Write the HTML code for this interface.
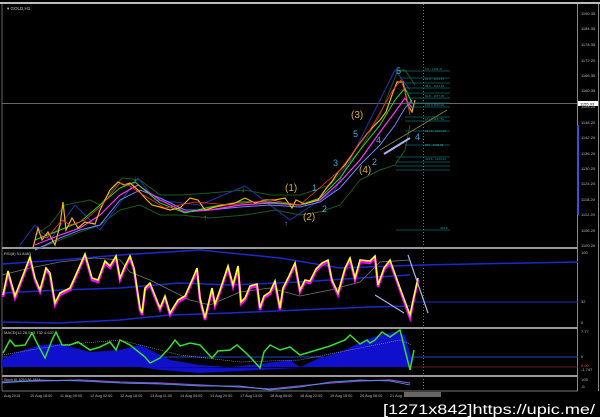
<!DOCTYPE html>
<html><head><meta charset="utf-8"><style>
html,body{margin:0;padding:0;background:#000;width:600px;height:417px;overflow:hidden}
svg{display:block}
text{font-family:"Liberation Sans",sans-serif}
</style></head><body>
<svg width="600" height="417" viewBox="0 0 600 417" xmlns="http://www.w3.org/2000/svg">
<rect width="600" height="417" fill="#000"/>
<rect x="0" y="2" width="600" height="2" fill="#bbb"/>
<line x1="2" y1="4" x2="2" y2="391" stroke="#666"/>
<line x1="577.5" y1="4" x2="577.5" y2="391" stroke="#888"/>
<line x1="598.5" y1="4" x2="598.5" y2="391" stroke="#888"/>
<rect x="2" y="247" width="576" height="2" fill="#999"/>
<rect x="2" y="327" width="576" height="2" fill="#999"/>
<rect x="2" y="375" width="576" height="2" fill="#999"/>
<line x1="2" y1="391" x2="578" y2="391" stroke="#777"/>
<text x="7" y="10" fill="#ccc" font-size="4.5">▾ GOLD,H1</text>
<line x1="2" y1="103.5" x2="578" y2="103.5" stroke="#888" stroke-width="0.8"/>
<line x1="423.5" y1="4" x2="423.5" y2="391" stroke="#777" stroke-dasharray="1,2"/>
<g fill="#bbb" font-size="4">
<text x="581" y="15">1190.35</text><text x="581" y="30">1184.35</text><text x="581" y="46">1178.35</text>
<text x="581" y="62">1172.20</text><text x="581" y="77">1166.35</text><text x="581" y="92">1160.35</text>
<text x="581" y="108">1154.20</text><text x="581" y="124">1148.20</text><text x="581" y="139">1142.20</text>
<text x="581" y="155">1136.20</text><text x="581" y="170">1130.20</text><text x="581" y="185">1124.20</text>
<text x="581" y="201">1118.20</text><text x="581" y="216">1112.20</text><text x="581" y="232">1106.20</text>
<text x="581" y="247">1100.20</text>
<text x="581" y="254">100</text><text x="581" y="303">32</text><text x="581" y="324">0</text>
<text x="581" y="333">7.77</text><text x="581" y="358">0</text><text x="581" y="367" fill="#e44">0.00</text>
<text x="581" y="371">-1.747</text><text x="581" y="381">105</text><text x="581" y="388">-5</text>
</g>
<rect x="578" y="101" width="20" height="5" fill="#fff"/>
<text x="580" y="105.5" fill="#000" font-size="4">1155.93</text>
<rect x="577" y="125" width="2" height="90" fill="#3355dd"/>
<polyline fill="none" stroke="#1a5a1a" stroke-width="1" points="35,235 50,225 65,205 90,200 100,205 122,178 140,180 160,195 180,195 210,193 245,190 270,195 300,195 330,185 360,150 380,115 398,70 405,70 415,85"/>
<polyline fill="none" stroke="#1a5a1a" stroke-width="1" points="35,250 60,240 80,232 100,225 120,210 140,205 160,215 180,215 210,218 245,215 275,210 300,215 320,212 340,205 360,180 380,170 395,165 405,150 410,125"/>
<polyline fill="none" stroke="#2233aa" stroke-width="1" points="20,245 35,225 50,240 75,205 100,230 138,178 155,200 200,205 245,186 290,220 335,190 395,70 410,90"/>
<polyline fill="none" stroke="#6688ff" stroke-width="1" points="35,250 60,238 80,230 100,225 120,200 140,190 160,198 185,210 210,210 240,207 270,205 300,207 320,202 340,188 360,165 380,145 395,125 405,108 412,100"/>
<polyline fill="none" stroke="#ff33ff" stroke-width="1.2" points="35,245 60,235 80,228 100,215 120,195 138,185 160,200 185,212 210,210 240,205 270,203 300,205 320,200 340,182 360,160 380,132 395,112 405,98 412,108"/>
<polyline fill="none" stroke="#22dd22" stroke-width="1" points="35,240 60,230 80,222 100,205 120,188 135,182 160,203 185,213 210,207 240,202 270,202 300,205 320,198 340,178 360,150 380,125 395,100 405,88 412,103"/>
<polyline fill="none" stroke="#f0b020" stroke-width="1.2" points="33,248 38,228 42,240 48,232 55,245 60,225 63,202 66,230 72,218 78,228 85,222 95,224 100,210 105,200 110,190 118,182 124,185 130,183 138,190 145,198 152,205 160,207 170,210 180,208 190,198 198,200 205,210 215,207 225,205 235,203 245,198 255,203 265,200 275,200 285,198 292,208 296,200 305,204 318,200 325,190 333,180 338,172 345,165 355,150 360,143 366,135 372,128 380,120 386,112 392,95 397,82 403,82 408,105 412,112 415,100"/>
<polyline fill="none" stroke="#ff3322" stroke-width="0.8" points="40,235 47,238 62,220 70,225 85,220 102,205 120,183 130,186 140,193 165,208 195,202 230,205 270,200 300,205 340,170 370,130 393,90 401,80 406,95 410,115"/>
<g stroke="#0d6b6b" stroke-width="0.8">
<line x1="398" y1="71" x2="450" y2="71"/><line x1="400" y1="78" x2="450" y2="78"/><line x1="402" y1="83" x2="450" y2="83"/>
<line x1="404" y1="88" x2="450" y2="88"/><line x1="405" y1="93" x2="450" y2="93"/><line x1="405" y1="98" x2="450" y2="98"/>
<line x1="405" y1="103" x2="450" y2="103"/><line x1="405" y1="107" x2="450" y2="107"/><line x1="405" y1="117" x2="450" y2="117"/>
<line x1="405" y1="121" x2="450" y2="121"/><line x1="405" y1="131" x2="450" y2="131"/><line x1="405" y1="145" x2="450" y2="145"/>
<line x1="396" y1="157" x2="450" y2="157"/><line x1="396" y1="162" x2="450" y2="162"/><line x1="396" y1="166" x2="450" y2="166"/>
<line x1="396" y1="170" x2="450" y2="170"/><line x1="396" y1="230" x2="450" y2="230"/>
</g>
<g fill="#2a9a9a" font-size="3"><text x="425" y="70">0.0 - 1169.31</text><text x="425" y="80">23.6 - 1164.67</text><text x="425" y="87">38.2 - 1161.83</text><text x="425" y="97">61.8 - 1157.05</text><text x="425" y="106">100.0 1152.00</text><text x="425" y="120">161.8 1147.50</text><text x="425" y="132">261.8 - 1144.46</text><text x="425" y="146">200 - 1136.06</text><text x="425" y="160">423.6 - 1134.00</text><text x="440" y="229">423.6</text></g>
<line x1="380" y1="150" x2="447" y2="110" stroke="#8a8a30" stroke-width="0.8"/>
<line x1="384" y1="154" x2="410" y2="138" stroke="#aab0ee" stroke-width="2"/>
<g fill="#d9b030" font-size="10"><text x="285" y="191">(1)</text><text x="303" y="220">(2)</text><text x="351" y="118">(3)</text><text x="359" y="173">(4)</text></g>
<g fill="#3aa8dd" font-size="9"><text x="312" y="191">1</text><text x="322" y="212">2</text><text x="333" y="166">3</text><text x="353" y="137">5</text><text x="372" y="165">2</text><text x="396" y="74">5</text><text x="415" y="140">4</text><text x="376" y="143">4</text></g>
<g fill="#3a88dd" font-size="8"><text x="133" y="181">↓</text><text x="284" y="226">↑</text></g>
<g fill="#3a9a3a" font-size="8"><text x="241" y="192">↓</text><text x="203" y="220">↑</text></g>
<text x="4" y="255" fill="#ccc" font-size="4">RSI(8) 51.8483</text>
<polyline fill="none" stroke="#1a2acc" stroke-width="1.5" points="2,264 60,260 120,255 200,250 280,258 340,268 420,265 578,262"/>
<polyline fill="none" stroke="#1a2acc" stroke-width="1.5" points="2,293 60,290 120,288 180,283 230,285 300,282 360,278 410,275"/>
<polyline fill="none" stroke="#1a2acc" stroke-width="1.5" points="2,322 60,323 120,320 170,315 230,313 300,310 370,307 410,306"/>
<line x1="410" y1="302" x2="578" y2="302" stroke="#1a2acc" stroke-width="1"/>
<polyline fill="none" stroke="#777" stroke-width="0.8" points="2,275 30,268 60,262 95,258 120,260 130,272 150,280 170,290 190,300 210,305 240,292 270,288 300,296 330,290 360,282 380,262 410,260"/>
<polyline fill="none" stroke="#ff00ff" stroke-width="2.5" points="3,297 8,273 15,298 25,272 30,259 35,280 40,292 46,270 50,275 55,305 60,295 70,290 78,272 85,256 92,280 98,282 105,263 110,268 116,258 120,280 125,268 130,258 134,270 140,310 142,315 145,290 150,285 160,310 165,298 170,315 178,302 185,298 193,280 197,270 200,300 205,320 212,290 215,306 220,292 228,268 233,287 238,268 241,304 245,300 250,288 257,286 260,310 264,298 270,294 275,283 280,310 283,290 289,278 295,265 300,292 305,282 310,283 316,271 322,265 328,262 332,282 338,295 345,270 350,260 355,280 360,262 370,263 375,258 378,287 384,270 390,262 400,290 410,318 414,298 418,280"/>
<polyline fill="none" stroke="#ffff33" stroke-width="1.6" points="3,295 8,271 15,296 25,270 30,257 35,278 40,290 46,268 50,273 55,303 60,293 70,288 78,270 85,254 92,278 98,280 105,261 110,266 116,256 120,278 125,266 130,256 134,268 140,308 142,313 145,288 150,283 160,308 165,296 170,313 178,300 185,296 193,278 197,268 200,298 205,318 212,288 215,304 220,290 228,266 233,285 238,266 241,302 245,298 250,286 257,284 260,308 264,296 270,292 275,281 280,308 283,288 289,276 295,263 300,290 305,280 310,281 316,269 322,263 328,260 332,280 338,293 345,268 350,258 355,278 360,260 370,261 375,256 378,285 384,268 390,260 400,288 410,315 414,296 418,278"/>
<line x1="375" y1="295" x2="404" y2="313" stroke="#aab0ee" stroke-width="1.2"/>
<line x1="408" y1="255" x2="428" y2="313" stroke="#aab0ee" stroke-width="1.2"/>
<text x="4" y="334" fill="#ccc" font-size="4">MACD(12,26,9) 3.732 4.637</text>
<line x1="2" y1="357" x2="578" y2="357" stroke="#2244cc" stroke-width="1"/>
<line x1="410" y1="367" x2="578" y2="367" stroke="#882222" stroke-width="0.8"/>
<polygon fill="#1010cc" points="2,367 2,360 15,353 40,345 60,344 90,352 120,350 140,345 150,350 170,360 200,365 230,367 260,364 290,360 300,367 320,358 330,355 345,350 365,340 380,335 395,332 405,335 412,360 412,367"/>
<polygon fill="#1010cc" points="140,367 160,370 200,373 240,371 260,370 300,368 140,367"/>
<polyline fill="none" stroke="#aaa" stroke-width="0.6" stroke-dasharray="1,1" points="2,355 60,345 120,340 180,355 240,362 300,360 360,348 400,340 412,345"/>
<polyline fill="none" stroke="#33dd33" stroke-width="1.5" points="3,353 10,340 15,346 25,345 32,333 38,345 45,358 52,340 56,332 62,345 70,345 78,342 90,350 100,347 110,342 116,350 120,340 130,345 145,357 150,363 160,358 170,347 175,340 180,346 190,343 200,345 212,358 218,351 230,350 237,345 245,352 252,359 260,368 264,352 270,345 280,350 290,347 300,355 310,352 320,349 330,346 345,340 350,335 360,344 367,340 370,343 375,340 382,332 390,337 400,330 405,350 410,370 414,350"/>
<text x="4" y="381" fill="#ccc" font-size="3.5">Stoch 81.8263 86.1834</text>
<polyline fill="none" stroke="#9944cc" stroke-width="1.2" points="2,382 40,381 80,380 120,382 160,383 200,385 240,387 270,389 300,386 330,383 360,381 390,380 410,383"/>
<polyline fill="none" stroke="#33aaee" stroke-width="0.8" points="2,383 40,380 80,381 120,383 160,384 200,386 240,386 270,390 300,387 330,382 360,380 390,381 410,385"/>
<g fill="#bbb" font-size="3.8"><text x="4" y="397">Aug 2015</text><text x="30" y="397">10 Aug 16:00</text><text x="60" y="397">11 Aug 09:00</text><text x="90" y="397">12 Aug 02:00</text><text x="120" y="397">12 Aug 18:00</text><text x="150" y="397">13 Aug 11:00</text><text x="180" y="397">14 Aug 04:00</text><text x="210" y="397">14 Aug 20:00</text><text x="240" y="397">17 Aug 13:00</text><text x="270" y="397">18 Aug 06:00</text><text x="300" y="397">18 Aug 22:00</text><text x="330" y="397">19 Aug 15:00</text><text x="360" y="397">20 Aug 08:00</text><text x="390" y="397">21 Aug</text></g>
<rect x="404" y="392" width="37" height="5" fill="#666"/>
<text x="383" y="414" fill="#fff" font-size="13.5" textLength="212" lengthAdjust="spacingAndGlyphs">[1271x842]https://upic.me/</text>
</svg>
</body></html>
